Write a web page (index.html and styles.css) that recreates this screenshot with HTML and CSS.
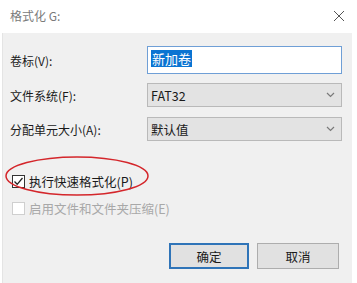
FILE: index.html
```html
<!DOCTYPE html>
<html>
<head>
<meta charset="utf-8">
<link rel="stylesheet" href="styles.css">
</head>
<body>
<div class="dialog">
  <div class="titlebar">
    <span class="title">格式化 G:</span>
    <svg class="close" width="12" height="12" viewBox="0 0 12 12"><path d="M1 1L11 11M11 1L1 11" stroke="#555" stroke-width="1"/></svg>
  </div>
  <div class="body">
    <div class="form">
      <div class="row row-input">
        <span class="label">卷标(V):</span>
        <div class="input"><span class="sel">新加卷</span></div>
      </div>
      <div class="row row-select">
        <span class="label">文件系统(F):</span>
        <div class="select"><span>FAT32</span>
          <svg width="9" height="6" viewBox="0 0 9 6"><path d="M1 1L4.5 4.5L8 1" fill="none" stroke="#7a7a7a" stroke-width="1.2"/></svg>
        </div>
      </div>
      <div class="row row-select">
        <span class="label">分配单元大小(A):</span>
        <div class="select"><span>默认值</span>
          <svg width="9" height="6" viewBox="0 0 9 6"><path d="M1 1L4.5 4.5L8 1" fill="none" stroke="#7a7a7a" stroke-width="1.2"/></svg>
        </div>
      </div>
    </div>
    <div class="checks">
      <div class="check">
        <span class="box"><svg width="11" height="11" viewBox="0 0 11 11"><path d="M1.5 5.5L4.2 8.3L9.5 2" fill="none" stroke="#222" stroke-width="1.3"/></svg></span>
        <span>执行快速格式化(P)</span>
      </div>
      <div class="check disabled">
        <span class="box"></span>
        <span>启用文件和文件夹压缩(E)</span>
      </div>
      <svg class="ring" width="146" height="42" viewBox="0 0 146 42"><ellipse cx="73" cy="21" rx="71" ry="19" fill="none" stroke="#d4262b" stroke-width="1.5"/></svg>
    </div>
    <div class="buttons">
      <div class="btn default">确定</div>
      <div class="btn">取消</div>
    </div>
  </div>
</div>
</body>
</html>
```

FILE: styles.css
```css
html, body {
  margin: 0;
  padding: 0;
  background: #ffffff;
}
.dialog {
  width: 357px;
  height: 283px;
  display: flex;
  flex-direction: column;
  font-family: "Noto Sans CJK SC", "Noto Sans", sans-serif;
  font-size: 12px;
  color: #1a1a1a;
  background: #ffffff;
  overflow: hidden;
}
.titlebar {
  height: 33px;
  flex: none;
  display: flex;
  align-items: center;
  justify-content: space-between;
  padding: 0 12px 0 10px;
}
.title {
  color: #7a7a7a;
  font-size: 12px;
  margin-top: -2px;
}
.close {
  margin-top: -2px;
}
.body {
  flex: 1;
  background: #f0f0f0;
  margin: 0 5px 0 2px;
  border-left: 1px solid #e4e4e4;
  position: relative;
  display: flex;
  flex-direction: column;
}
.form {
  padding: 13px 0 0 7px;
  display: flex;
  flex-direction: column;
  gap: 9px;
}
.row {
  display: grid;
  grid-template-columns: 137px 195px;
  align-items: center;
}
.row-select + .row-select {
  margin-top: 1px;
}
.input {
  height: 28px;
  box-sizing: border-box;
  border: 1px solid #6f9fd6;
  background: #fff;
  padding: 3px 3px;
  display: flex;
  align-items: flex-start;
}
.sel {
  background: #0a74d2;
  color: #fff;
  font-size: 13px;
  line-height: 17px;
  padding: 0 1px;
}
.select {
  height: 24px;
  box-sizing: border-box;
  border: 1px solid #b9b9b9;
  background: #e3e3e3;
  display: flex;
  align-items: center;
  justify-content: space-between;
  padding: 0 6px 0 3px;
  font-size: 12.5px;
}
.checks {
  position: relative;
  padding: 32px 0 0 9px;
  display: flex;
  flex-direction: column;
  gap: 11px;
}
.check {
  display: flex;
  align-items: center;
  gap: 4px;
  height: 16px;
  font-size: 12.5px;
}
.box {
  width: 13px;
  height: 13px;
  box-sizing: border-box;
  border: 1px solid #333;
  background: #fff;
  display: flex;
  align-items: center;
  justify-content: center;
}
.check.disabled {
  color: #a8a8a8;
}
.check.disabled .box {
  border-color: #cfcfcf;
}
.checks .ring {
  position: absolute;
  left: 1px;
  top: 14px;
}
.buttons {
  display: flex;
  justify-content: flex-end;
  gap: 8px;
  padding: 27px 13px 0 0;
}
.btn {
  width: 82px;
  height: 26px;
  box-sizing: border-box;
  border: 1px solid #adadad;
  background: #e1e1e1;
  display: flex;
  align-items: center;
  justify-content: center;
  font-size: 12.5px;
}
.btn.default {
  border: 2px solid #2f74b8;
  width: 80px;
}
```
